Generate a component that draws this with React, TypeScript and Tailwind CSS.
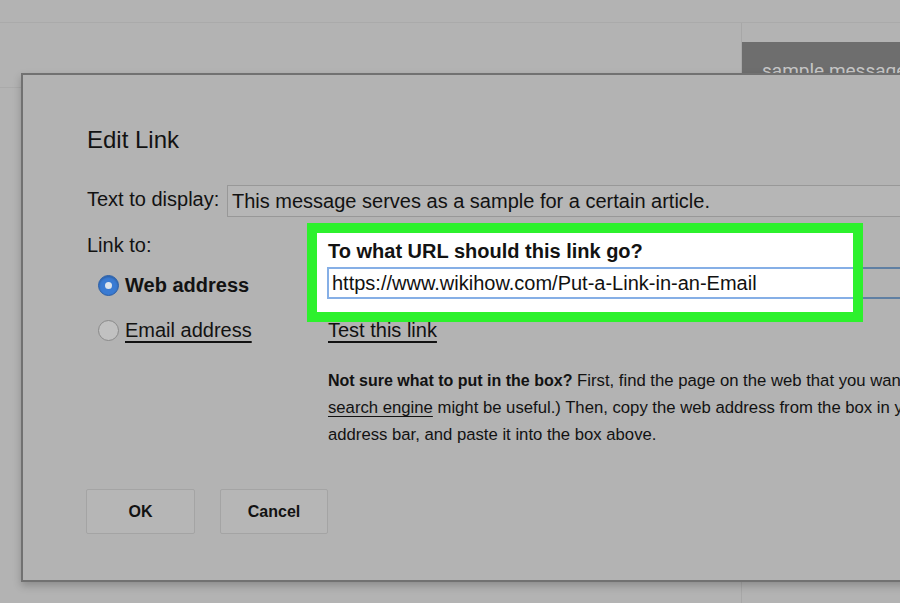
export default function App() {
  return (
    <div className="relative h-[603px] w-[900px] overflow-hidden bg-[#b3b3b3] font-['Liberation_Sans',Arial,sans-serif] text-[#121212]">
      {/* page behind the dialog */}
      <div className="h-[23px] border-b border-[#aaaaaa]" />
      <div className="flex h-[580px]">
        <div className="flex-1">
          <div className="h-[65px] border-b border-[#aaaaaa]" />
        </div>
        <div className="w-[159px] shrink-0 border-l border-[#a7a7a7] pt-[19px]">
          <div className="h-[64px] bg-[#6e6e6e] pl-[20px] pt-[17px] font-['Roboto',sans-serif] text-[19px] leading-[24px] whitespace-nowrap text-[#c6c6c6]">
            sample message
          </div>
        </div>
      </div>

      {/* dialog */}
      <div className="absolute left-[21px] top-[73px] w-[1000px] border-2 border-r-0 border-[#717171] bg-[#b3b3b3] pl-[64px] pt-[51px] pb-[46px] shadow-[0_4px_8px_rgba(0,0,0,0.22)]">
        <div className="text-[24px] leading-[28px]">Edit Link</div>

        <div className="mt-[31px] flex items-start">
          <div className="mt-[2px] w-[140px] shrink-0 text-[20px] leading-[24px]">Text to display:</div>
          <div className="flex h-[32px] flex-1 items-center border border-[#989898] bg-[#b6b6b6] pl-[4px] text-[20px] leading-[24px] whitespace-nowrap">
            This message serves as a sample for a certain article.
          </div>
        </div>

        <div className="mt-[6px] flex">
          <div className="w-[220px] shrink-0 pt-[10px] text-[20px] leading-[24px]">
            <div>Link to:</div>
            <div className="mt-[16px] ml-[11px] flex items-center gap-[6px]">
              <span className="flex h-[21px] w-[21px] items-center justify-center rounded-full border border-[#2c5fa6] bg-[#3a7bd3] shadow-[inset_0_1px_2px_rgba(0,0,0,0.25)]">
                <span className="h-[7px] w-[7px] rounded-full bg-[#dde4ec]" />
              </span>
              <span className="font-bold">Web address</span>
            </div>
            <div className="mt-[21px] ml-[11px] flex items-center gap-[6px]">
              <span className="h-[21px] w-[21px] rounded-full border border-[#8a8a8a] bg-[#c1c1c1]" />
              <span className="underline underline-offset-[4px]">Email address</span>
            </div>
          </div>

          <div className="flex flex-col">
            <div className="flex">
              <div className="w-[556px] shrink-0 border-[10px] border-[#2df12d] bg-white pt-[6px] pb-[13px] pl-[10px]">
                <div className="pl-[1px] text-[20px] font-bold leading-[24px]">To what URL should this link go?</div>
                <div className="mt-[4px] flex h-[32px] items-center border-2 border-r-0 border-[#86afe6] pl-[3px] text-[20px] leading-[24px] whitespace-nowrap text-[#111]">
                  https://www.wikihow.com/Put-a-Link-in-an-Email
                </div>
              </div>
              <div className="mt-[44px] h-[32px] w-[120px] border-y-2 border-[#5f7fa2]" />
            </div>

            <div className="mt-[-4px] ml-[21px] text-[20px] leading-[24px] underline underline-offset-[4px]">Test this link</div>

            <div className="mt-[25px] ml-[21px] text-[16.7px] leading-[27px] whitespace-nowrap">
              <div>
                <span className="text-[16px] font-bold">Not sure what to put in the box?</span> First, find the page on the web that you
                want to link to. (A
              </div>
              <div>
                <span className="underline underline-offset-[3px]">search engine</span> might be useful.) Then, copy the web address
                from the box in your browser's
              </div>
              <div>address bar, and paste it into the box above.</div>
            </div>
          </div>
        </div>

        <div className="mt-[41px] -ml-[1px] flex gap-[25px] text-[16px] font-bold">
          <div className="flex h-[45px] w-[109px] items-center justify-center rounded-[2px] border border-[#a4a4a4] bg-[#b6b6b6]">OK</div>
          <div className="flex h-[45px] w-[108px] items-center justify-center rounded-[2px] border border-[#a4a4a4] bg-[#b6b6b6]">Cancel</div>
        </div>
      </div>
    </div>
  );
}
